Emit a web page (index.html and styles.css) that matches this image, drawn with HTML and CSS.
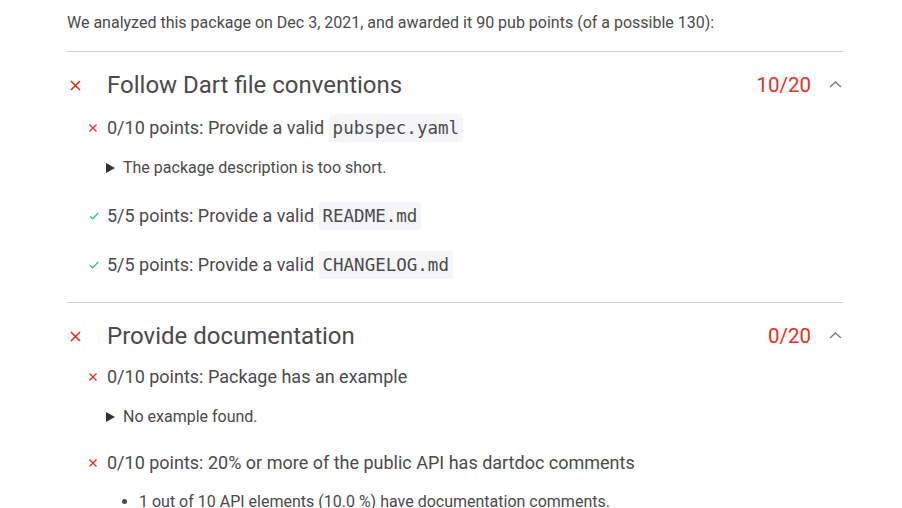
FILE: index.html
```html
<!DOCTYPE html>
<html>
<head>
<meta charset="utf-8">
<link rel="stylesheet" href="styles.css">
</head>
<body>
<div class="report">
  <p class="intro">We analyzed this package on Dec 3, 2021, and awarded it 90 pub points (of a possible 130):</p>

  <section class="section">
    <div class="sec-head">
      <span class="sec-icon"><svg width="11" height="11" viewBox="0 0 11 11"><path d="M1 1L10 10M10 1L1 10" stroke="#e5301c" stroke-width="1.6" fill="none"/></svg></span>
      <h2 class="sec-title">Follow Dart file conventions</h2>
      <span class="sec-score">10/20</span>
      <span class="chev"><svg width="13" height="7" viewBox="0 0 13 7"><path d="M1 6L6.5 1L12 6" stroke="#777" stroke-width="1.3" fill="none"/></svg></span>
    </div>
    <div class="items">
      <div class="group">
        <div class="item has-code"><span class="mark"><svg width="8" height="8" viewBox="0 0 8 8"><path d="M0.5 0.5L7.5 7.5M7.5 0.5L0.5 7.5" stroke="#e5301c" stroke-width="1.4" fill="none"/></svg></span>0/10 points: Provide a valid <code>pubspec.yaml</code></div>
        <div class="detail"><span class="tri"></span>The package description is too short.</div>
      </div>
      <div class="group">
        <div class="item has-code"><span class="mark"><svg width="10" height="8" viewBox="0 0 10 8"><path d="M0.8 4.2L3.6 6.8L9.2 1" stroke="#2ec98e" stroke-width="1.3" fill="none"/></svg></span>5/5 points: Provide a valid <code>README.md</code></div>
      </div>
      <div class="group">
        <div class="item has-code"><span class="mark"><svg width="10" height="8" viewBox="0 0 10 8"><path d="M0.8 4.2L3.6 6.8L9.2 1" stroke="#2ec98e" stroke-width="1.3" fill="none"/></svg></span>5/5 points: Provide a valid <code>CHANGELOG.md</code></div>
      </div>
    </div>
  </section>

  <section class="section">
    <div class="sec-head">
      <span class="sec-icon"><svg width="11" height="11" viewBox="0 0 11 11"><path d="M1 1L10 10M10 1L1 10" stroke="#e5301c" stroke-width="1.6" fill="none"/></svg></span>
      <h2 class="sec-title">Provide documentation</h2>
      <span class="sec-score">0/20</span>
      <span class="chev"><svg width="13" height="7" viewBox="0 0 13 7"><path d="M1 6L6.5 1L12 6" stroke="#777" stroke-width="1.3" fill="none"/></svg></span>
    </div>
    <div class="items">
      <div class="group">
        <div class="item"><span class="mark"><svg width="8" height="8" viewBox="0 0 8 8"><path d="M0.5 0.5L7.5 7.5M7.5 0.5L0.5 7.5" stroke="#e5301c" stroke-width="1.4" fill="none"/></svg></span>0/10 points: Package has an example</div>
        <div class="detail"><span class="tri"></span>No example found.</div>
      </div>
      <div class="group">
        <div class="item"><span class="mark"><svg width="8" height="8" viewBox="0 0 8 8"><path d="M0.5 0.5L7.5 7.5M7.5 0.5L0.5 7.5" stroke="#e5301c" stroke-width="1.4" fill="none"/></svg></span>0/10 points: 20% or more of the public API has dartdoc comments</div>
        <ul class="bullets">
          <li>1 out of 10 API elements (10.0 %) have documentation comments.</li>
        </ul>
      </div>
    </div>
  </section>
</div>
</body>
</html>
```

FILE: styles.css
```css
html, body {
  margin: 0;
  padding: 0;
  background: #ffffff;
}

body {
  font-family: Roboto, "Noto Sans", sans-serif;
  color: #4a4a4a;
  overflow: hidden;
}

.report {
  margin-left: 67px;
  width: 776px;
}

.intro {
  margin: 0;
  padding-top: 13px;
  height: 38px;
  font-size: 16px;
  line-height: 20px;
  color: #4a4a4a;
}

.section {
  border-top: 1px solid #cccccc;
  padding-bottom: 4px;
}

.sec-head {
  display: flex;
  align-items: center;
  height: 56px;
  padding-top: 4px;
}

.sec-icon {
  width: 40px;
  display: flex;
  align-items: center;
  padding-left: 3px;
  padding-top: 2px;
  box-sizing: border-box;
}

.sec-title {
  flex: 1;
  margin: 0;
  padding-top: 2px;
  font-size: 24px;
  font-weight: 400;
  color: #4a4a4a;
  line-height: 30px;
}

.sec-score {
  font-size: 20.5px;
  color: #e5301c;
  line-height: 30px;
  padding-top: 2px;
}

.chev {
  width: 32px;
  display: flex;
  justify-content: flex-end;
  padding-right: 1px;
  padding-top: 1px;
  box-sizing: border-box;
}

.items {
  padding-left: 22px;
}

.group {
  margin-bottom: 17px;
}

.item {
  position: relative;
  padding-left: 18px;
  font-size: 18px;
  line-height: 28px;
  color: #4a4a4a;
}

.item.has-code {
  padding-top: 2px;
  padding-bottom: 2px;
}

.mark {
  position: absolute;
  left: 0;
  top: 0;
  bottom: 0;
  display: flex;
  align-items: center;
}

code {
  font-family: "DejaVu Sans Mono", monospace;
  font-size: 17.5px;
  background: #f5f5f7;
  padding: 4px 4px;
  border-radius: 3px;
  color: #4a4a4a;
}

.detail {
  margin: 14px 0 0 17px;
  padding-bottom: 5px;
  font-size: 16px;
  line-height: 20px;
  display: flex;
  align-items: center;
}

.item:not(.has-code) + .detail {
  margin-top: 16px;
}

.tri {
  width: 0;
  height: 0;
  border-top: 5px solid transparent;
  border-bottom: 5px solid transparent;
  border-left: 9px solid #333;
  margin-right: 8px;
}

.bullets {
  margin: 15px 0 0 0;
  padding-left: 50px;
  font-size: 16px;
  line-height: 20px;
}
```
